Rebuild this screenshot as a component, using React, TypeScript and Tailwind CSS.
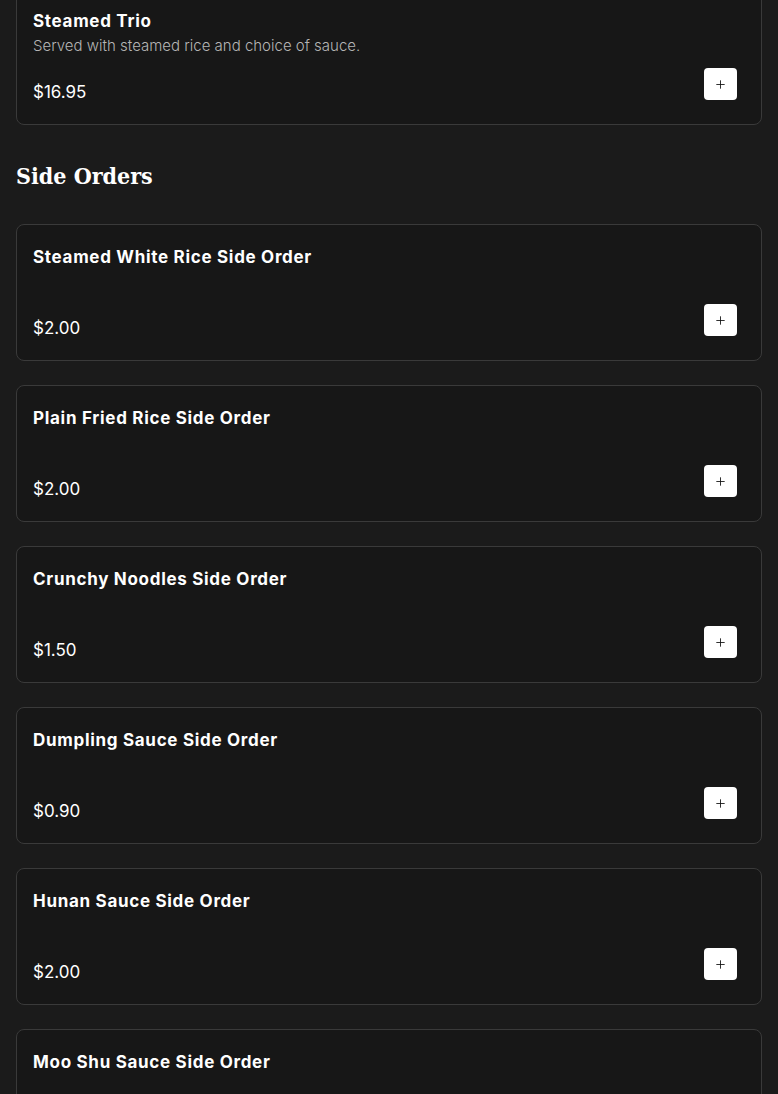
import { Plus } from 'lucide-react';

type Item = { name: string; desc?: string; price: string };

const SIDES: Item[] = [
  { name: 'Steamed White Rice Side Order', price: '$2.00' },
  { name: 'Plain Fried Rice Side Order', price: '$2.00' },
  { name: 'Crunchy Noodles Side Order', price: '$1.50' },
  { name: 'Dumpling Sauce Side Order', price: '$0.90' },
  { name: 'Hunan Sauce Side Order', price: '$2.00' },
  { name: 'Moo Shu Sauce Side Order', price: '$2.00' },
];

function MenuCard({ item }: { item: Item }) {
  return (
    <div className="rounded-lg border border-[#3a3a3a] bg-[#171717] pl-4 pr-6 pt-5 pb-5">
      <h3 className="h-6 text-[17px] leading-6 font-bold tracking-[0.7px] text-white">{item.name}</h3>
      <p className="mt-px h-6 text-[15px] leading-6 font-light text-[#b5b5b5]">{item.desc}</p>
      <div className="mt-[10px] flex items-start justify-between">
        <span className="mt-3 text-[17px] leading-6 font-normal text-white">{item.price}</span>
        <button className="flex h-8 w-[33px] items-center justify-center rounded bg-white text-[#111]">
          <Plus size={13} strokeWidth={1.6} />
        </button>
      </div>
    </div>
  );
}

export default function App() {
  return (
    <div
      className="h-[1094px] overflow-hidden bg-[#1b1b1b] px-4"
      style={{ fontFamily: 'Inter, "Liberation Sans", sans-serif' }}
    >
      <div className="-mt-3">
        <MenuCard item={{ name: 'Steamed Trio', desc: 'Served with steamed rice and choice of sauce.', price: '$16.95' }} />
      </div>

      <h2
        className="mt-[33px] mb-[30px] text-[23px] leading-9 font-bold text-white"
        style={{ fontFamily: '"DejaVu Serif Condensed", "DejaVu Serif", serif' }}
      >
        Side Orders
      </h2>

      <div className="flex flex-col gap-6 pb-6">
        {SIDES.map((s) => (
          <MenuCard key={s.name} item={s} />
        ))}
      </div>
    </div>
  );
}
